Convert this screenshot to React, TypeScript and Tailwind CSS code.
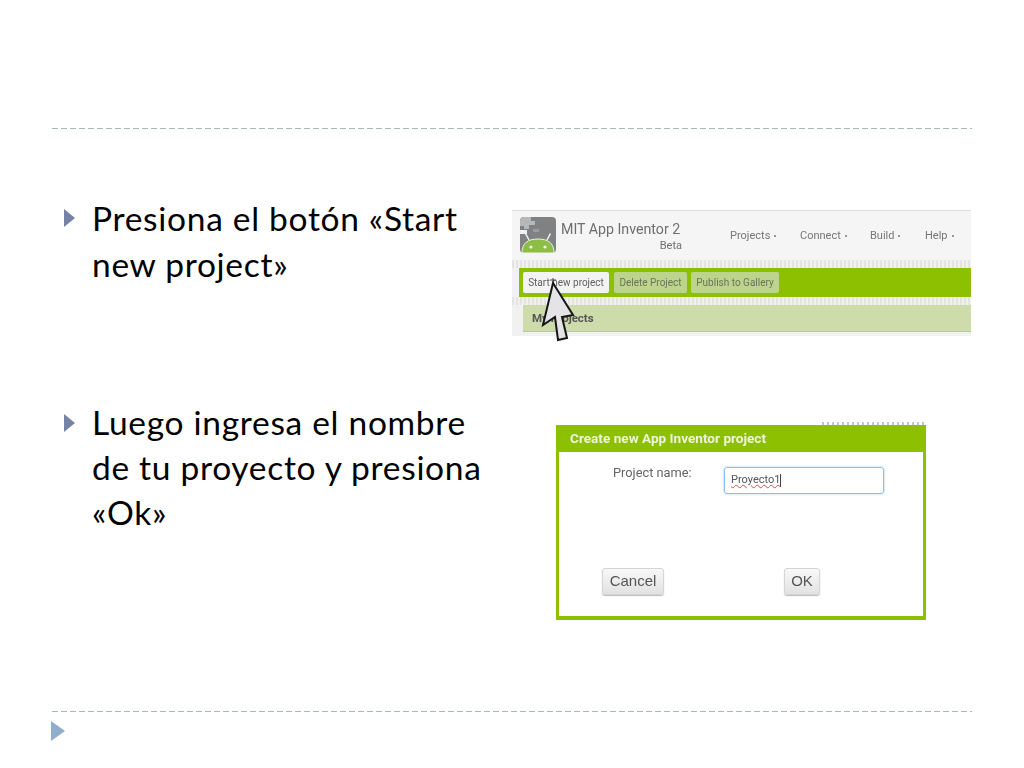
import React from "react";

const Bullet = () => (
  <svg width="11" height="18" viewBox="0 0 11 18" className="mt-[14px] shrink-0">
    <path d="M0 0 L11 9 L0 18 Z" fill="#7583a6" />
  </svg>
);

const Dashed = () => (
  <div className="mx-[52px] h-px bg-[repeating-linear-gradient(90deg,#a8b8b8_0_6px,transparent_6px_9px)]" />
);

const Logo = () => (
  <svg width="36" height="36" viewBox="0 0 36 36" className="shrink-0">
    <rect width="36" height="36" rx="4" fill="#808183" />
    <path d="M0 4 Q0 0 4 0 H11 V4 H15 V8 H9 V12 H4 V9 H0 Z" fill="#b6b7b8" />
    <path d="M0 13 H7 V17 H0 Z" fill="#f1f1f1" />
    <path d="M13 12 H19 V15 H13 Z" fill="#9a9b9c" />
    <path d="M2 36 C2 26 8 22 18 22 C28 22 34 26 34 36 Q34 36 32 36 H4 Q2 36 2 36 Z" fill="#8cbd45" stroke="#eef2e6" strokeWidth="1" />
    <path d="M9 23 L5.5 16.5 M27 23 L30.5 16.5" stroke="#f2f2f2" strokeWidth="1.5" />
    <circle cx="11" cy="30" r="1.6" fill="#f4f4f4" />
    <circle cx="25" cy="30" r="1.6" fill="#f4f4f4" />
  </svg>
);

const NavItem = ({ label, className }: { label: string; className: string }) => (
  <span className={"flex items-center gap-[4px] text-[11px] text-[#777] " + className}>
    {label}
    <span className="mb-px size-[2px] rounded-full bg-[#777]" />
  </span>
);

const AppInventorPanel = () => (
  <div className="relative mt-[15px] h-[126px] w-[459px] overflow-visible bg-[#f1f1f1] font-['Roboto',sans-serif] blur-[0.5px]">
    <header className="flex h-[50px] items-start border-t border-[#dcdcdc] bg-[#f5f5f5] pl-[8px] pt-[6px]">
      <Logo />
      <div className="ml-[5px] flex w-[121px] flex-col pt-[2px]">
        <span className="text-[14.2px] leading-[20px] whitespace-nowrap text-[#6e6e6e]">MIT App Inventor 2</span>
        <span className="self-end text-[11px] leading-[14px] text-[#707070]">Beta</span>
      </div>
      <nav className="flex pt-[12px] leading-[14px]">
        <NavItem label="Projects" className="ml-[48px] w-[70px]" />
        <NavItem label="Connect" className="w-[70px]" />
        <NavItem label="Build" className="w-[55px]" />
        <NavItem label="Help" className="" />
      </nav>
    </header>
    <div className="h-[8px] bg-[repeating-linear-gradient(90deg,#e4e4e4_0_2px,#f1f1f1_2px_4px)]" />
    <div className="ml-[7px] flex h-[29px] items-center gap-[5px] bg-[#8cc000] pl-[4px] text-[10px]">
      <button className="h-[21px] w-[86px] rounded-[2px] bg-[#f3f3f3] text-[#5f5f5f]">Start new project</button>
      <button className="h-[21px] w-[73px] rounded-[2px] bg-[#bdd48c] text-[#69745a]">Delete Project</button>
      <button className="-ml-px h-[21px] w-[88px] rounded-[2px] bg-[#bdd48c] text-[#69745a]">Publish to Gallery</button>
    </div>
    <div className="h-[8px] bg-[repeating-linear-gradient(90deg,#e4e4e4_0_2px,#f1f1f1_2px_4px)]" />
    <div className="ml-[11px] flex h-[27px] items-center border-b border-[#b9c99c] bg-[#cedcac] pl-[9px] pt-[1px] text-[11.5px] font-bold text-[#555]">
      My Projects
    </div>
    <svg width="38" height="66" viewBox="0 0 38 66" className="absolute left-[27px] top-[67px]">
      <path
        d="M14 6 L34 38 L23 40 L28 61 L19 63 L16 40 L4 48 Z"
        fill="#e4e4e6"
        stroke="#161616"
        strokeWidth="2"
        strokeLinejoin="miter"
      />
      <path d="M14 1 V5 M11 3 L17 3" stroke="#444" strokeWidth="1" />
    </svg>
  </div>
);

const DialogButton = ({ label, className }: { label: string; className: string }) => (
  <button
    className={
      "h-[27px] rounded-[3px] border border-[#d5d5d5] bg-[linear-gradient(#f8f8f8,#e2e2e2)] font-['Liberation_Sans',sans-serif] text-[15px] text-[#555] shadow-[0_1px_1px_#bbb] " +
      className
    }
  >
    {label}
  </button>
);

const NewProjectDialog = () => (
  <div className="relative mt-[25px] ml-[44px] flex h-[195px] w-[370px] flex-col bg-[#8cc000] px-[3px] pb-[4px] font-['Roboto',sans-serif] blur-[0.4px]">
    <div className="absolute -top-[3px] right-0 h-[3px] w-[104px] bg-[repeating-linear-gradient(90deg,#c4c4c4_0_2px,transparent_2px_5px)]" />
    <div className="flex h-[27px] items-center pl-[11px] text-[13.6px] font-bold text-[#eef3dc]">
      Create new App Inventor project
    </div>
    <div className="flex flex-1 flex-col bg-white">
      <div className="flex items-start pt-[15px]">
        <span className="ml-[54px] w-[111px] text-[12.8px] leading-[12px] text-[#666]">Project name:</span>
        <div className="flex h-[27px] w-[160px] items-center rounded-[3px] border border-[#8fbfe2] pl-[6px] text-[11px] text-[#555] shadow-[0_0_3px_#a9d0ee]">
          <span className="underline decoration-[#d05050] decoration-wavy decoration-[0.5px]">Proyecto1</span>
          <span className="h-[13px] w-px bg-[#444]" />
        </div>
      </div>
      <div className="mt-auto mb-[21px] flex">
        <DialogButton label="Cancel" className="ml-[43px] w-[62px]" />
        <DialogButton label="OK" className="ml-[120px] w-[36px]" />
      </div>
    </div>
  </div>
);

export default function App() {
  return (
    <div className="flex h-[768px] w-[1024px] flex-col overflow-hidden bg-white font-['Lato',sans-serif] text-black">
      <div className="h-[128px]" />
      <Dashed />
      <main className="mt-[66px] flex flex-col">
        <section className="flex h-[205px] items-start">
          <div className="ml-[64px] flex w-[448px] gap-[17px]">
            <Bullet />
            <p className="text-[33.5px] leading-[46px] tracking-[0.7px] whitespace-nowrap">
              Presiona el botón «Start
              <br />
              new project»
            </p>
          </div>
          <AppInventorPanel />
        </section>
        <section className="flex items-start">
          <div className="ml-[64px] flex w-[448px] gap-[17px]">
            <Bullet />
            <p className="text-[33.5px] leading-[45px] tracking-[0.7px] whitespace-nowrap">
              Luego ingresa el nombre
              <br />
              de tu proyecto y presiona
              <br />
              «Ok»
            </p>
          </div>
          <NewProjectDialog />
        </section>
      </main>
      <div className="mt-auto mb-[56px]">
        <Dashed />
      </div>
      <svg width="14" height="20" viewBox="0 0 14 20" className="absolute left-[51px] top-[721px]">
        <path d="M0 0 L14 10 L0 20 Z" fill="#8eaecb" />
      </svg>
    </div>
  );
}
